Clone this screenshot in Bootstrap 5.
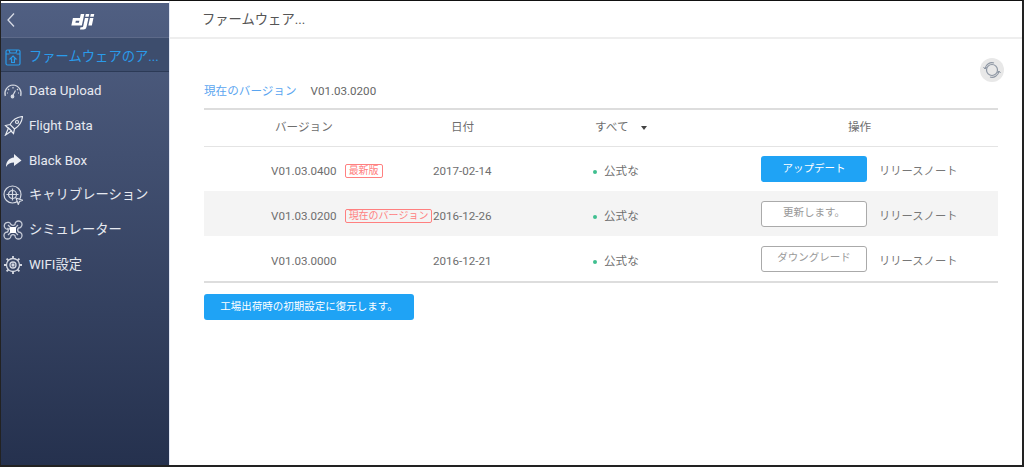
<!DOCTYPE html>
<html lang="ja">
<head>
<meta charset="utf-8">
<title>Firmware</title>
<link href="https://cdn.jsdelivr.net/npm/bootstrap@5.3.0/dist/css/bootstrap.min.css" rel="stylesheet">
<style>
html,body{height:467px;overflow:hidden;background:#fff}
body{font-family:Roboto,"Noto Sans CJK JP",sans-serif;font-size:11.6px;color:#666}
.frame{height:467px;border-top:1px solid #111;border-left:1px solid #222;border-right:2px solid #222;border-bottom:2px solid #222}
.side{width:168px;flex:none;background:linear-gradient(#505f82,#25314e);color:#e6e9f0;margin-top:2px}
.side-top{height:35px;border-bottom:1px solid #5d6a89;position:relative}
.side-top .back{position:absolute;left:5px;top:9px}
.dji-logo{position:absolute;left:70px;top:10px}
.side-item{height:34.7px;padding-left:2px;padding-top:4px;font-size:13.3px;white-space:nowrap;overflow:hidden}
.side-item svg{width:20px;height:20px;margin-right:6px;flex:none}
.side-item.active{height:34px;background:#3d4d6d;border-bottom:1px solid #2c3a56;color:#2a9bea}
.side-main{border-left:1px solid #e3e8f5;min-width:0}
.main-head{height:38px;border-bottom:2px solid #eee;padding-left:32px;font-size:13.3px;color:#555;line-height:37px}
.main-body{padding:0 24px 0 34px}
.refresh-wrap{height:35px;padding-top:19px;margin-right:-6px}
.refresh-btn{width:24px;height:24px;background:#e8e8e8;border-radius:50%;flex:none}
.cur-line{height:34px;padding-top:8px;line-height:18px}
.cur-line a{color:#5aa5f0;text-decoration:none;margin-right:14px}
.vtable{width:100%;margin:0;table-layout:fixed;border-top:2px solid #ddd;border-bottom:2px solid #ddd}
.vtable th,.vtable td{padding:0;font-weight:400;color:#6e6e6e;vertical-align:middle;border:0;background:transparent;box-shadow:none;white-space:nowrap}
.vtable td{padding-top:6px}
.vtable td.act-cell{padding-top:0}
.vtable thead tr{height:37px;border-bottom:1px solid #e4e4e4}
.vtable tbody tr{height:45px}
.vtable tbody tr:last-child{height:46px}
.vtable tbody tr.alt{background:#f4f4f4}
.c-ver{width:229px;padding-left:71px!important}
.c-date{width:160px;padding-left:18px!important}
.c-type{width:168px;padding-left:2px!important}
.c-act{padding-left:87px!important}
.vtable td.cell-ver{padding-left:67px}
.tag-red{display:inline-block;border:1px solid #ff8080;color:#ff8080;border-radius:2px;font-size:10px;line-height:12px;padding:0 3px;margin-left:8px;vertical-align:1px}
.dot{display:inline-block;width:4px;height:4px;border-radius:50%;background:#3fbf8f;margin-right:7px;vertical-align:middle}
.act-btn{width:106px;height:26px;font-size:10.5px;line-height:1;padding:0;border-radius:3px;flex:none}
.act-blue{background:#1fa3f5;color:#fff;border:0}
.act-out{background:#fff;border:1px solid #aaa;color:#999}
.note{margin-left:12px;color:#777;font-size:11.3px;padding-top:7px}
.reset-btn{background:#1fa3f5;color:#fff;border:0;border-radius:3px;width:210px;height:26px;font-size:10.5px;padding:0;margin-top:11px}
.caret-d{display:inline-block;border:3px solid transparent;border-top:4px solid #444;border-bottom:0;margin-left:12px;vertical-align:middle}
</style>
</head>
<body>
<div class="frame d-flex">
  <aside class="side">
    <div class="side-top">
      <svg class="back" width="10" height="16" viewBox="0 0 10 16"><path d="M8 1.500 2 8l6 6.500" fill="none" stroke="#d7dbe5" stroke-width="1.300"/></svg>
      <svg class="dji-logo" width="29" height="17" viewBox="0 0 29 17" fill="#fff"><g transform="translate(3 0) skewX(-12)"><path fill-rule="evenodd" d="M0 5h7V1h3.500v11.500H0zM3.500 7.800v2h3.500v-2z"/><path d="M12 5h3.500v9q0 2.500-2.500 2.500H9.500v-2.300h1.500q1 0 1-1zM12 1h3.500v2.800H12zM17 5h3.500v7.500H17zM17 1h3.500v2.800H17z"/></g></svg>
    </div>
    <div class="side-item active d-flex align-items-center">
      <svg viewBox="0 0 20 20" fill="none" stroke="#2a9bea" stroke-width="1.200"><path d="M6 3H4.500Q3 3 3 4.500v12Q3 18 4.500 18h11q1.500 0 1.500-1.500v-12Q17 3 15.500 3H14M6 3l1 3h6l1-3zM3 7h3.500M17 7h-3.500"/><path d="M10 9l3 3h-1.600v3.500H8.600V12H7z"/></svg>
      <span>ファームウェアのア...</span>
    </div>
    <div class="side-item d-flex align-items-center">
      <svg viewBox="0 0 20 20" fill="none" stroke="#d5d9e2" stroke-width="1.200"><path d="M2.300 15A8.500 8.500 0 0 1 10 4a8.500 8.500 0 0 1 7.700 11M5 8l1 1M15 8l-1 1M10 6v1.500M4 12h1M16 12h-1M9.500 15l3-5.500"/><circle cx="9.500" cy="15.500" r="1.300" fill="#d5d9e2"/></svg>
      <span>Data Upload</span>
    </div>
    <div class="side-item d-flex align-items-center">
      <svg viewBox="0 0 20 20" fill="none" stroke="#e8ebf1" stroke-width="1.200"><path d="M19.500 .5c-5.500.5-9.500 3-12.500 8l4.500 4.500c5-3 7.500-7.500 8-12.500zM7 8.500l-4.500 1 2.500 2.500M11.500 13l-1 4.500-2.500-2.500M5.500 12l3 3-6 4z"/><circle cx="14" cy="6" r="1.500"/></svg>
      <span>Flight Data</span>
    </div>
    <div class="side-item d-flex align-items-center">
      <svg viewBox="0 0 20 20" fill="#eef0f5"><path d="M11 3l7.500 6.500L11 15v-3.500C7.500 11.500 5 12.500 3 16c0-5.500 3-9 8-9.500z"/></svg>
      <span>Black Box</span>
    </div>
    <div class="side-item d-flex align-items-center">
      <svg viewBox="0 0 20 20" fill="none" stroke="#d5d9e2" stroke-width="1.200"><circle cx="9.500" cy="9.500" r="8.500"/><circle cx="9.500" cy="9.500" r="4"/><path d="M9.500 3.500v12M3.500 9.500h12"/><path d="M13 13l6.500 2.300-3 1.200-1.200 3z" fill="#3f4d6e"/></svg>
      <span>キャリブレーション</span>
    </div>
    <div class="side-item d-flex align-items-center">
      <svg viewBox="0 0 20 20" fill="none" stroke="#c5cad6" stroke-width="1.300"><path d="M7.500 8A3.500 3.500 0 1 1 8 4.500a3 3 0 0 0 4 0A3.500 3.500 0 1 1 15.500 8a3 3 0 0 0 0 4 3.500 3.500 0 1 1-3.500 3.500 3 3 0 0 0-4 0A3.500 3.500 0 1 1 4.500 12a3 3 0 0 0 0-4"/><path d="M5 5l3 3M15 5l-3 3M5 15l3-3M15 15l-3-3"/><rect x="7" y="7" width="6" height="6" fill="#fff" stroke="none"/></svg>
      <span>シミュレーター</span>
    </div>
    <div class="side-item d-flex align-items-center">
      <svg viewBox="0 0 20 20" fill="none" stroke="#d5d9e2" stroke-width="1.300"><circle cx="10" cy="10" r="6.500"/><circle cx="10" cy="10" r="3"/><circle cx="10" cy="10" r="1" fill="#d5d9e2"/><path stroke-width="1.800" d="M10 1v2.500M10 16.500V19M1 10h2.500M16.500 10H19M3.600 3.600l1.800 1.800M14.600 14.600l1.800 1.800M16.400 3.600l-1.800 1.800M5.400 14.600l-1.800 1.800"/></svg>
      <span>WIFI設定</span>
    </div>
  </aside>
  <main class="side-main flex-grow-1">
    <div class="main-head">ファームウェア...</div>
    <div class="main-body">
      <div class="refresh-wrap d-flex justify-content-end">
        <div class="refresh-btn d-flex align-items-center justify-content-center">
          <svg width="20" height="20" viewBox="0 0 20 20" fill="none" stroke="#8d96a3" stroke-width="1.200"><circle cx="10" cy="10" r="5.500"/><path d="M3 8.500A7.200 7.200 0 0 1 12 3M17 11.500A7.200 7.200 0 0 1 8 17"/><path d="M1.500 7l1.500 2 1.700-1.700M18.500 13L17 11l-1.700 1.700" stroke-width="1"/></svg>
        </div>
      </div>
      <div class="cur-line"><a href="#">現在のバージョン</a>V01.03.0200</div>
      <table class="table vtable">
        <thead>
          <tr><th class="c-ver">バージョン</th><th class="c-date">日付</th><th class="c-type">すべて<span class="caret-d"></span></th><th class="c-act">操作</th></tr>
        </thead>
        <tbody>
          <tr><td class="cell-ver">V01.03.0400<span class="tag-red">最新版</span></td><td>2017-02-14</td><td><span class="dot"></span>公式な</td><td class="act-cell"><div class="d-flex align-items-center"><button class="act-btn act-blue">アップデート</button><span class="note">リリースノート</span></div></td></tr>
          <tr class="alt"><td class="cell-ver">V01.03.0200<span class="tag-red">現在のバージョン</span></td><td>2016-12-26</td><td><span class="dot"></span>公式な</td><td class="act-cell"><div class="d-flex align-items-center"><button class="act-btn act-out">更新します。</button><span class="note">リリースノート</span></div></td></tr>
          <tr><td class="cell-ver">V01.03.0000</td><td>2016-12-21</td><td><span class="dot"></span>公式な</td><td class="act-cell"><div class="d-flex align-items-center"><button class="act-btn act-out">ダウングレード</button><span class="note">リリースノート</span></div></td></tr>
        </tbody>
      </table>
      <button class="reset-btn">工場出荷時の初期設定に復元します。</button>
    </div>
  </main>
</div>
</body>
</html>
